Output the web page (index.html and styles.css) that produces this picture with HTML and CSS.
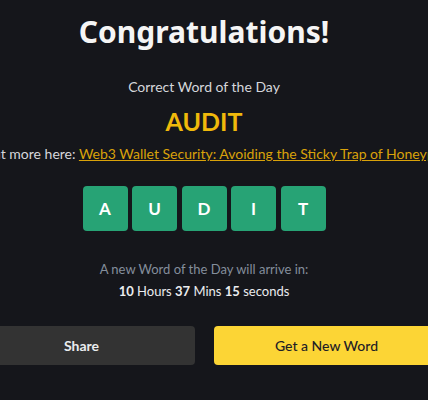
FILE: index.html
```html
<!DOCTYPE html>
<html lang="en">
<head>
    <meta charset="UTF-8">
    <meta name="viewport" content="width=device-width, initial-scale=1.0">
    <title>Word of the Day</title>
    <link rel="stylesheet" href="styles.css">
</head>
<body>
    <div class="result">
        <h1 class="title">Congratulations!</h1>
        <p class="label">Correct Word of the Day</p>
        <p class="answer">AUDIT</p>
        <p class="more">Find out more here: <a href="#">Web3 Wallet Security: Avoiding the Sticky Trap of Honeypots</a></p>
        <div class="tiles">
            <span class="tile">A</span>
            <span class="tile">U</span>
            <span class="tile">D</span>
            <span class="tile">I</span>
            <span class="tile">T</span>
        </div>
        <p class="next">A new Word of the Day will arrive in:</p>
        <p class="countdown"><b>10</b> Hours <b>37</b> Mins <b>15</b> seconds</p>
        <div class="actions">
            <button class="btn btn-share">Share</button>
            <button class="btn btn-new">Get a New Word</button>
        </div>
    </div>
</body>
</html>
```

FILE: styles.css
```css
html, body {
    margin: 0;
    padding: 0;
    background-color: #15161b;
    overflow: hidden;
}
body {
    font-family: Lato, "Liberation Sans", sans-serif;
    color: #eaecef;
}
.result {
    width: 408px;
    display: flex;
    flex-direction: column;
    align-items: center;
}
.title {
    margin: 12px 0 0;
    font-family: "Noto Sans", sans-serif;
    font-size: 30px;
    font-weight: 700;
    line-height: 40px;
    color: #f5f5f5;
}
.label {
    margin: 25px 0 0;
    font-size: 14px;
    line-height: 20px;
    color: #d5d7db;
}
.answer {
    margin: 9px 0 0;
    font-size: 25px;
    font-weight: 700;
    line-height: 30px;
    color: #f0b90b;
}
.more {
    margin: 8px 0 0;
    font-size: 14px;
    line-height: 20px;
    white-space: nowrap;
    color: #d5d7db;
}
.more a {
    color: #d9a20a;
}
.tiles {
    display: flex;
    gap: 4.5px;
    margin-top: 22px;
}
.tile {
    width: 45px;
    height: 45px;
    border-radius: 4px;
    background-color: #27a375;
    color: #ffffff;
    font-size: 17px;
    font-weight: 700;
    display: flex;
    align-items: center;
    justify-content: center;
}
.next {
    margin: 29px 0 0;
    font-size: 13px;
    line-height: 18px;
    color: #848e9c;
}
.countdown {
    margin: 4px 0 0;
    font-size: 13px;
    line-height: 18px;
    color: #eaecef;
}
.actions {
    display: flex;
    gap: 19px;
    margin-top: 26px;
}
.btn {
    width: 226px;
    height: 39px;
    border: none;
    border-radius: 4px;
    font-family: Lato, "Liberation Sans", sans-serif;
    font-size: 14px;
    cursor: pointer;
}
.btn-share {
    background-color: #333333;
    color: #eaecef;
    font-weight: 700;
}
.btn-new {
    background-color: #fcd535;
    color: #1e2026;
    font-weight: 500;
}
```
